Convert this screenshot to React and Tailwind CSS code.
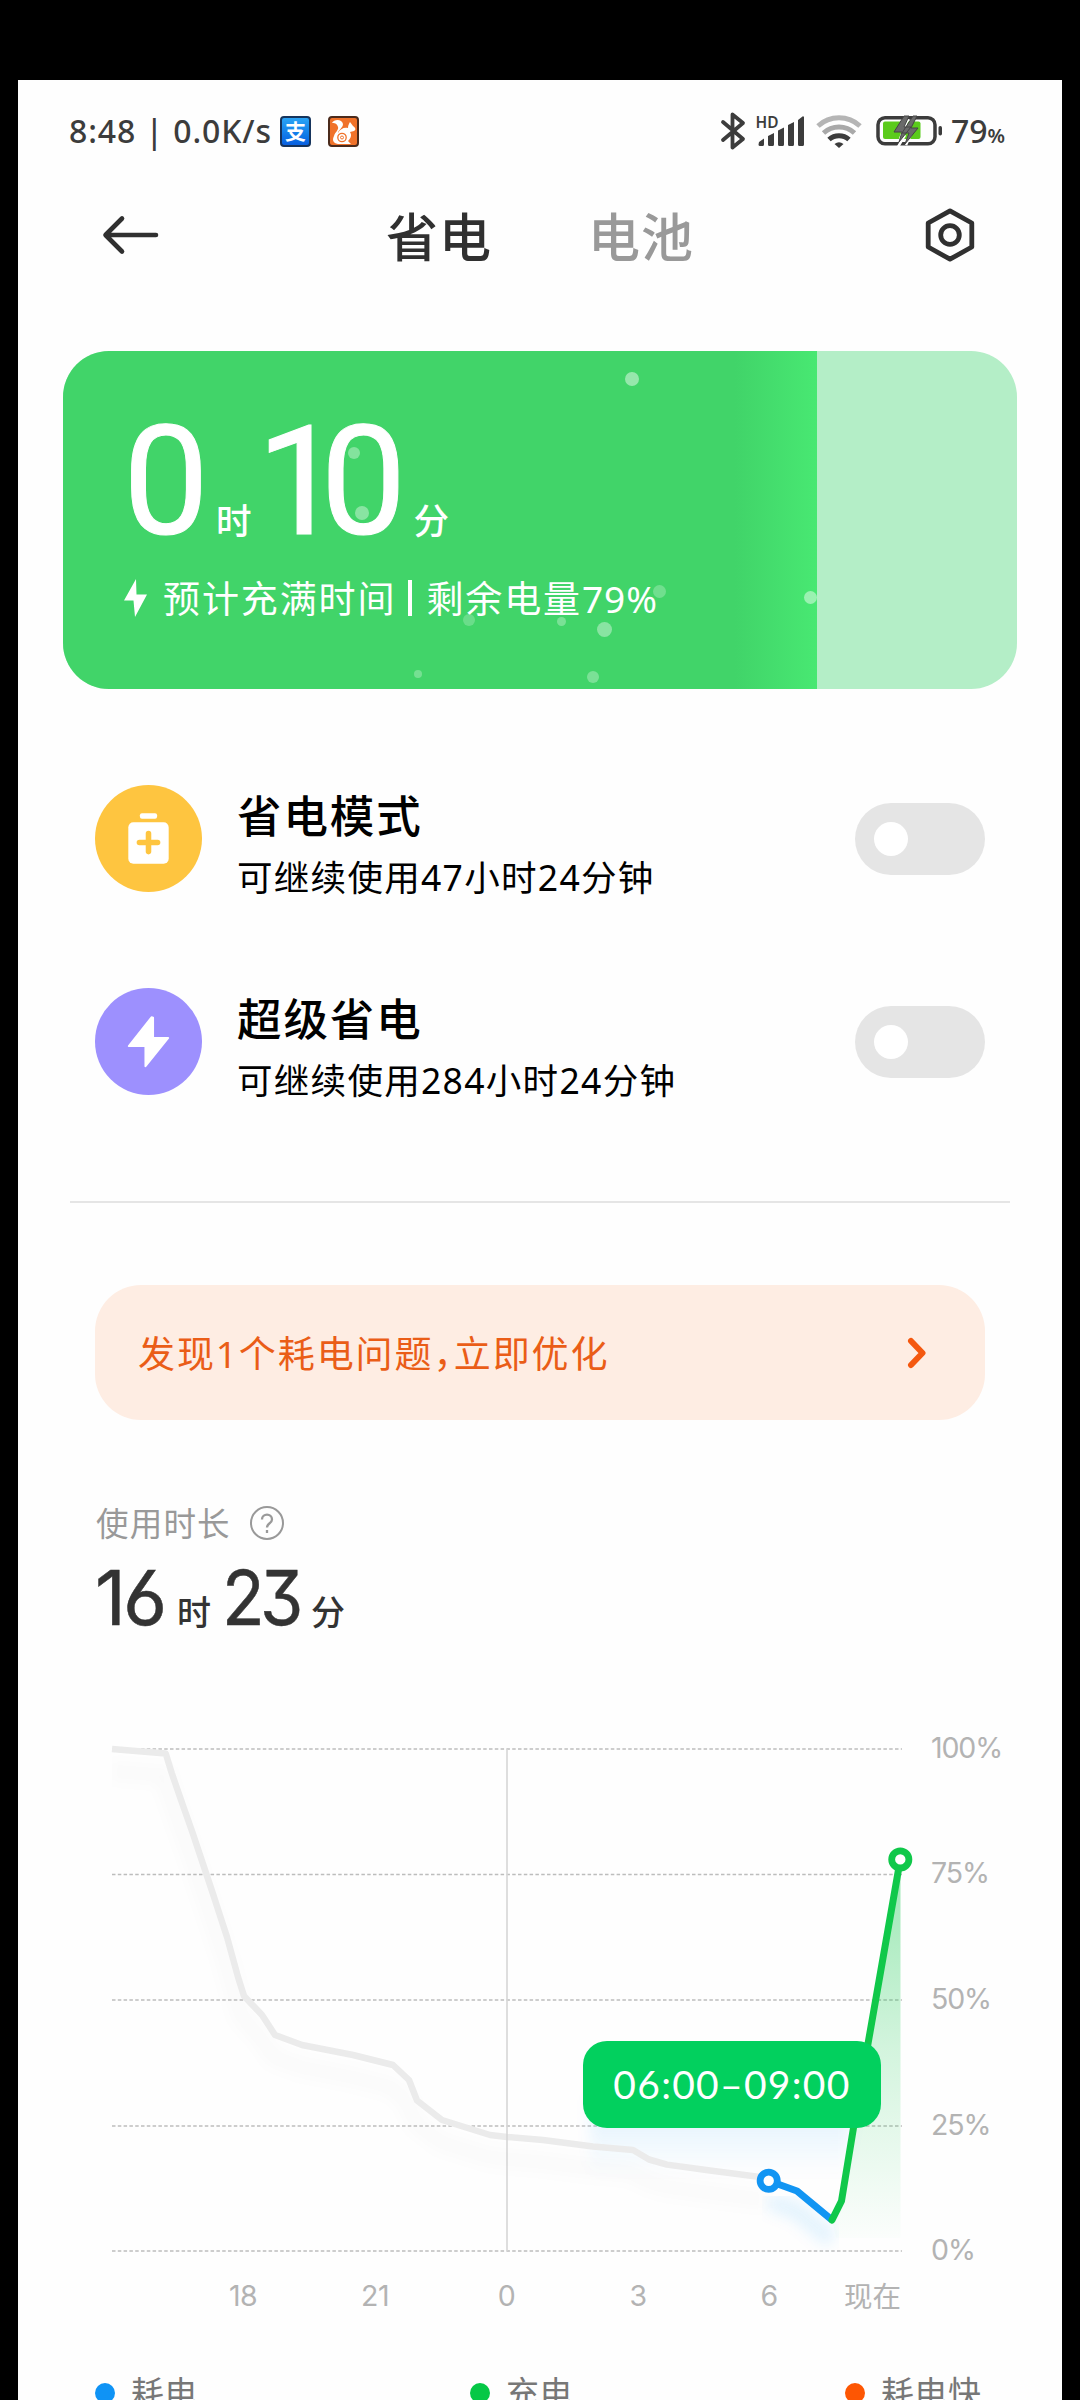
import { useState } from "react";

const FONT = "font-['Noto_Sans','Noto_Sans_CJK_SC',sans-serif]";

const BUBBLES = [
  { x: 568.6, y: 27.7, r: 7, o: 0.45 },
  { x: 290.7, y: 101.7, r: 6, o: 0.35 },
  { x: 299, y: 161.7, r: 7, o: 0.38 },
  { x: 406.4, y: 269, r: 6, o: 0.22 },
  { x: 498.7, y: 270.7, r: 4.5, o: 0.3 },
  { x: 541, y: 278.7, r: 7.5, o: 0.38 },
  { x: 530.4, y: 325.7, r: 6, o: 0.3 },
  { x: 354.8, y: 322.7, r: 4, o: 0.28 },
  { x: 596.8, y: 240.7, r: 6.5, o: 0.25 },
  { x: 747, y: 246.3, r: 6.5, o: 0.45 },
];

const GREY_LINE =
  "112,1749 165.7,1753.4 171.7,1773 180,1797 193,1834 213,1894 227,1937 238,1977 244,1996 262,2015 275,2035 302,2045 353,2055 393,2065 409,2080 417,2100.5 442,2120 490,2135 507,2137 543,2140 593,2146.5 633,2150 649,2159.5 667,2164.6 710,2170.5 768,2178";
const BLUE_LINE = "768.7,2180.8 797,2191 832,2220";
const GREEN_LINE = "832,2220 841.5,2201 853.3,2129 868.3,2042 900.3,1859.4";

const LEVELS = [
  { label: "100%", y: 1749 },
  { label: "75%", y: 1874.5 },
  { label: "50%", y: 2000 },
  { label: "25%", y: 2126 },
  { label: "0%", y: 2251 },
];

const HOURS = [
  { label: "18", x: 243 },
  { label: "21", x: 375 },
  { label: "0", x: 506.5 },
  { label: "3", x: 638 },
  { label: "6", x: 769 },
];

function StatusBar() {
  return (
    <div className="flex h-[102px] items-center pl-[51px] text-[#3c3c3c]">
      <span className="w-[211px] text-[32px] leading-none font-medium tracking-[0.9px] whitespace-nowrap">
        8:48 | 0.0K/s
      </span>
      <div className="flex h-[31px] w-[31px] items-center justify-center rounded-[4px] border-2 border-[#16345c] bg-linear-to-b from-[#2ba4f5] to-[#0a5fe0]">
        <span className="text-[21px] leading-[27px] font-bold text-white">支</span>
      </div>
      <svg className="ml-[17px]" width="31" height="31" viewBox="0 0 31 31">
        <rect x="1" y="1" width="29" height="29" rx="3" fill="#f0722a" stroke="#4a2a1c" strokeWidth="2" />
        <path
          d="M4 7c2-4 10-4 11 1 0 4-5 6-5 9 2-4 6-6 10-5 0-3 1-4 2-6l3 4c3 2 3 4 1 5l-4 1c2 3 1 6-2 9l3 3H10c-5-1-6-4-4-8 1-4 5-6 4-9-1-4-4-4-6-4z"
          fill="#fff"
        />
        <circle cx="14" cy="21.5" r="4.2" fill="none" stroke="#f0722a" strokeWidth="1.3" />
        <circle cx="14" cy="21.5" r="1.5" fill="none" stroke="#f0722a" strokeWidth="1" />
      </svg>

      <svg className="ml-[361px]" width="26" height="40" viewBox="0 0 26 40" fill="none" stroke="#3c3c3c" strokeWidth="3.8" strokeLinejoin="round" strokeLinecap="round">
        <path d="M3 11 23 28 12.5 36.5V3.5L23 12 3 29" />
      </svg>
      <svg className="ml-[9px] overflow-visible" width="52" height="34" viewBox="0 0 52 34" fill="#3c3c3c">
        <text x="0.5" y="14" fontSize="16.5" fontWeight="600" textLength="23" lengthAdjust="spacingAndGlyphs">HD</text>
        <path d="M4 28 9 24.5V30.5a1.5 1.5 0 0 1-1.5 1.5H5a1.5 1.5 0 0 1-1.5-1.5zM13 22l6-3v11.5a1.5 1.5 0 0 1-1.5 1.5h-3a1.5 1.5 0 0 1-1.5-1.5zM23 16.5l6-3v17a1.5 1.5 0 0 1-1.5 1.5h-3a1.5 1.5 0 0 1-1.5-1.5zM33 11l6-3v22.5a1.5 1.5 0 0 1-1.5 1.5h-3a1.5 1.5 0 0 1-1.5-1.5zM43 6l4.5-3.5a1 1 0 0 1 1.5 1v27a1.5 1.5 0 0 1-1.5 1.5h-3a1.5 1.5 0 0 1-1.5-1.5z" />
      </svg>
      <svg className="ml-[9px]" width="46" height="34" viewBox="0 0 46 34" fill="none">
        <path d="M2 12a31 31 0 0 1 42 0" stroke="#b5b5b5" strokeWidth="5" />
        <path d="M7.5 19a23 23 0 0 1 31 0" stroke="#a9a9a9" strokeWidth="5" />
        <path d="M13 25.5a15 15 0 0 1 20 0" stroke="#3c3c3c" strokeWidth="5" />
        <path d="M18.5 30q4.5-3.5 9 0L23 34z" fill="#3c3c3c" />
      </svg>
      <svg className="ml-[14px]" width="68" height="32" viewBox="0 0 68 32">
        <rect x="7" y="6.5" width="37.5" height="17.5" rx="2" fill="#5bcb1c" />
        <rect x="2" y="2.7" width="57" height="26" rx="7" fill="none" stroke="#3c3c3c" strokeWidth="3.5" />
        <path d="M24 24 32 4M22 32l7-12M30 30l6-13" stroke="#fff" strokeWidth="2.5" />
        <path d="M28 1 18 17h8l-3 10 12-15h-7l5-11zM37 1 26 18h7l-4 11 13-16h-7l6-12z" fill="#6a6a6a" stroke="#444" strokeWidth="1" />
        <rect x="62.5" y="11" width="3.5" height="9.5" rx="1.7" fill="#3c3c3c" />
      </svg>
      <div className="ml-[7px] flex items-baseline font-medium">
        <span className="text-[32px] leading-none">79</span>
        <span className="text-[20px] leading-none font-semibold">%</span>
      </div>
    </div>
  );
}

function Header() {
  return (
    <div className="flex h-[106px] items-center">
      <svg className="ml-[83px]" width="60" height="44" viewBox="0 0 60 44" fill="none" stroke="#303030" strokeWidth="4.6" strokeLinecap="round" strokeLinejoin="round">
        <path d="M55 22H5M21 5.5 4.5 22 21 38.5" />
      </svg>
      <h1 className="ml-[225px] pt-[3px] text-[52px] leading-none font-medium tracking-[1px] text-[#303030]">省电</h1>
      <span className="ml-[96px] pt-[3px] text-[52px] leading-none font-medium tracking-[1px] text-[#999]">电池</span>
      <svg className="ml-[228px]" width="56" height="56" viewBox="0 0 56 56" fill="none" stroke="#303030" strokeWidth="4.8" strokeLinejoin="round">
        <path d="M28 3.8 49.8 16V40L28 52.2 6.2 40V16z" />
        <circle cx="28" cy="28" r="9.3" />
      </svg>
    </div>
  );
}

function ChargeCard() {
  return (
    <div className="relative mx-[45px] mt-[63px] flex h-[338px] overflow-hidden rounded-[46px] bg-[#b4eec7]">
      <div className="w-[754px] bg-[linear-gradient(90deg,#41d469_0,#41d469_672px,#48e872_754px)] pt-[54px] text-white">
        <div className="flex items-baseline pl-[60px] leading-none">
          <span className="font-[Roboto] text-[153px] leading-none [-webkit-text-stroke:1px_white]">0</span>
          <span className="ml-[7px] text-[35.5px] font-medium">时</span>
          <span className="ml-[5px] font-[Roboto] text-[153px] leading-none tracking-[-22px] [-webkit-text-stroke:1px_white]">10</span>
          <span className="ml-[29px] text-[35.5px] font-medium">分</span>
        </div>
        <div className="mt-[20px] flex items-center whitespace-nowrap">
          <svg className="ml-[60px]" width="26" height="40" viewBox="0 0 26 40" fill="#fff">
            <path d="M13 1 1 22.5h9.5L12 39 24 16.5H13.5z" />
          </svg>
          <span className="ml-[14px] text-[37px] leading-none tracking-[1.9px]">预计充满时间</span>
          <span className="ml-[12px] h-[36px] w-[4px] bg-white" />
          <span className="ml-[14px] text-[37px] leading-none tracking-[1.9px]">剩余电量</span>
          <span className="text-[37px] leading-none tracking-[0.9px]">79%</span>
        </div>
      </div>
      {BUBBLES.map((b) => (
        <span
          key={`${b.x}-${b.y}`}
          className="absolute rounded-full bg-white"
          style={{ left: b.x - b.r, top: b.y - b.r, width: b.r * 2, height: b.r * 2, opacity: b.o }}
        />
      ))}
    </div>
  );
}

function Toggle({ on, onChange }) {
  return (
    <button
      role="switch"
      aria-checked={on}
      onClick={onChange}
      className={`flex h-[72px] w-[130px] items-center rounded-full px-[19px] ${on ? "justify-end bg-[#41d469]" : "bg-[#e5e5e5]"}`}
    >
      <span className="h-[34px] w-[34px] rounded-full bg-white" />
    </button>
  );
}

function ModeRow({ icon, title, desc }) {
  const [on, setOn] = useState(false);
  return (
    <div className="flex h-[203px] items-center pr-[77px] pl-[77px]">
      {icon}
      <div className="mt-[15px] ml-[35px] flex-1 whitespace-nowrap text-black">
        <h2 className="text-[44.5px] leading-[62px] font-medium tracking-[1.9px]">{title}</h2>
        <p className="text-[35.5px] leading-[61px] tracking-[1.3px]">{desc}</p>
      </div>
      <Toggle on={on} onChange={() => setOn(!on)} />
    </div>
  );
}

function BatteryChart() {
  return (
    <div className="relative">
      <svg className="block" width="1044" height="640" viewBox="18 1700 1044 640">
        <defs>
          <linearGradient id="greenFade" x1="0" y1="1860" x2="0" y2="2240" gradientUnits="userSpaceOnUse">
            <stop offset="0" stopColor="#10c84a" stopOpacity="0.42" />
            <stop offset="0.5" stopColor="#10c84a" stopOpacity="0.18" />
            <stop offset="1" stopColor="#10c84a" stopOpacity="0.01" />
          </linearGradient>
          <linearGradient id="tipGlow" x1="0" y1="2110" x2="0" y2="2175" gradientUnits="userSpaceOnUse">
            <stop offset="0" stopColor="#1295f3" stopOpacity="0.11" />
            <stop offset="1" stopColor="#1295f3" stopOpacity="0" />
          </linearGradient>
          <filter id="soft" x="-10%" y="-10%" width="120%" height="140%">
            <feGaussianBlur stdDeviation="7" />
          </filter>
          <clipPath id="plot">
            <rect x="112" y="1700" width="789" height="560" />
          </clipPath>
        </defs>

        <g stroke="#bdbdbd" strokeWidth="1.5" strokeDasharray="3.5 2.3">
          {LEVELS.map((l) => (
            <line key={l.label} x1="112" x2="902" y1={l.y} y2={l.y} />
          ))}
        </g>

        <g clipPath="url(#plot)" fill="none">
          <polyline points={GREY_LINE} transform="translate(-2 22)" stroke="#000" strokeOpacity="0.017" strokeWidth="18" filter="url(#soft)" />
          <polyline points={BLUE_LINE} transform="translate(0 20)" stroke="#1295f3" strokeOpacity="0.1" strokeWidth="18" filter="url(#soft)" />
        </g>
        <path d="M590 2100H853L846 2180H590z" fill="url(#tipGlow)" filter="url(#soft)" />
        <path d="M900.5 1860V2238H836L832 2220 841.5 2201 868.3 2042z" fill="url(#greenFade)" />

        <polyline points={GREY_LINE} fill="none" stroke="#ebebeb" strokeWidth="6.5" strokeLinejoin="round" />
        <line x1="507" x2="507" y1="1749" y2="2251" stroke="#d6d6d6" strokeWidth="1.6" />
        <polyline points={BLUE_LINE} fill="none" stroke="#1295f3" strokeWidth="7" strokeLinejoin="round" />
        <polyline points={GREEN_LINE} fill="none" stroke="#10c84a" strokeWidth="7" strokeLinejoin="round" strokeLinecap="round" />
        <circle cx="768.7" cy="2180.8" r="8.6" fill="#fff" stroke="#1295f3" strokeWidth="6.8" />
        <circle cx="900.3" cy="1859.4" r="8.6" fill="#fff" stroke="#10c84a" strokeWidth="6.8" />

        <g fill="#b3b3b3" fontSize="28.5" className="font-[Inter,'Noto_Sans_CJK_SC',sans-serif]">
          {LEVELS.map((l) => (
            <text key={l.label} x="931" y={l.y + 8.5} letterSpacing="-1.1">
              {l.label}
            </text>
          ))}
          {HOURS.map((h) => (
            <text key={h.label} x={h.x} y="2306" textAnchor="middle" letterSpacing="-0.5">
              {h.label}
            </text>
          ))}
          <text x="844" y="2307">现在</text>
        </g>
      </svg>
      <div className="absolute top-[341px] left-[565px] flex h-[87px] w-[298px] items-center justify-center rounded-[24px] bg-[#02d05e] font-[Lato] text-[39px] leading-none tracking-[1.3px] text-white">
        06:00–09:00
      </div>
    </div>
  );
}

function LegendItem({ color, label }) {
  return (
    <div className="flex w-[375px] shrink-0 items-center">
      <span className={`h-[20px] w-[20px] rounded-full ${color}`} />
      <span className="ml-[16px] text-[33px] leading-[40px] tracking-[0.5px] text-[#777]">{label}</span>
    </div>
  );
}

export default function App() {
  return (
    <div className={`h-[2400px] w-[1080px] overflow-hidden bg-black px-[18px] pt-[80px] ${FONT}`}>
      <div className="h-[2320px] overflow-hidden bg-[#fefefe]">
        <StatusBar />
        <Header />
        <ChargeCard />

        <div className="mt-[48px]">
          <ModeRow
            title="省电模式"
            desc="可继续使用47小时24分钟"
            icon={
              <svg width="107" height="107" viewBox="0 0 106 106">
                <circle cx="53" cy="53" r="53" fill="#fec540" />
                <rect x="44.5" y="28" width="17" height="5.5" rx="2" fill="#fff" />
                <rect x="33" y="37" width="40" height="41" rx="5" fill="#fff" />
                <path d="M53 48v18M44 57h18" stroke="#fec540" strokeWidth="5.5" strokeLinecap="round" />
              </svg>
            }
          />
          <ModeRow
            title="超级省电"
            desc="可继续使用284小时24分钟"
            icon={
              <svg width="107" height="107" viewBox="0 0 106 106">
                <circle cx="53" cy="53" r="53" fill="#9d90fe" />
                <path d="M56 29 33.5 57.5H50V77.5L72.5 49.5H57.5V29.5z" fill="#fff" stroke="#fff" strokeWidth="2" strokeLinejoin="round" />
              </svg>
            }
          />
        </div>

        <div className="mx-[52px] mt-[58px] h-[2px] bg-[#e5e5e5]" />

        <div className="mx-[77px] mt-[82px] flex h-[135px] items-center rounded-[46px] bg-[#feede3] pr-[58px] pl-[43px]">
          <span className="flex-1 pt-[1px] text-[37px] leading-none tracking-[1.9px] whitespace-nowrap text-[#ea5d17]">
            发现1个耗电问题<span className="[font-feature-settings:'halt']">，</span>立即优化
          </span>
          <svg width="20" height="32" viewBox="0 0 20 32" fill="none" stroke="#f4580f" strokeWidth="6" strokeLinecap="round" strokeLinejoin="round">
            <path d="M4 4 15.5 16 4 28" />
          </svg>
        </div>

        <div className="mt-[80px] flex h-[46px] items-center pl-[78px]">
          <span className="pt-[2px] text-[32.5px] leading-none tracking-[1.2px] text-[#999]">使用时长</span>
          <svg className="ml-[18px]" width="36" height="36" viewBox="0 0 36 36" fill="none" stroke="#999" strokeWidth="2">
            <circle cx="18" cy="18" r="16" />
            <path d="M13 14.5c0-6.5 10-6.5 10 0 0 4-5 3.5-5 8M18 25v3" strokeWidth="2.3" />
          </svg>
        </div>
        <div className="mt-[11px] flex h-[80px] items-baseline pl-[77px] leading-none text-[#333]">
          <span className="inline-block w-[72px] font-[Inter] text-[76px] leading-[80px] tracking-[-3px] whitespace-nowrap [-webkit-text-stroke:0.5px_#333] [font-feature-settings:'cv03','cv04','cv09']">16</span>
          <span className="ml-[10px] text-[34px] font-medium">时</span>
          <span className="ml-[11px] inline-block w-[86px] origin-left scale-x-92 font-[Inter] text-[76px] leading-[80px] tracking-[-5px] [-webkit-text-stroke:0.5px_#333] [font-feature-settings:'cv03','cv04','cv09']">23</span>
          <span className="ml-[3px] text-[34px] font-medium">分</span>
        </div>

        <div className="mt-[63px]">
          <BatteryChart />
        </div>

        <div className="mt-[33px] flex pl-[77px]">
          <LegendItem color="bg-[#0f93f5]" label="耗电" />
          <LegendItem color="bg-[#05c846]" label="充电" />
          <LegendItem color="bg-[#fd5603]" label="耗电快" />
        </div>
      </div>
    </div>
  );
}
